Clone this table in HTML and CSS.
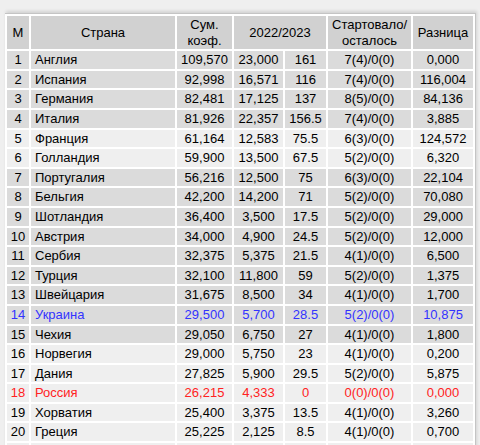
FILE: index.html
```html
<!DOCTYPE html>
<html lang="ru">
<head>
  <meta charset="UTF-8" />
  <meta name="viewport" content="width=device-width, initial-scale=1.0" />
  <title>Таблица коэффициентов УЕФА</title>
  <link rel="stylesheet" href="styles.css">
</head>
<body>
  <div class="frame">
    <table class="rating">
      <colgroup>
        <col class="c-pos">
        <col class="c-country">
        <col class="c-sum">
        <col class="c-season">
        <col class="c-points">
        <col class="c-teams">
        <col class="c-diff">
      </colgroup>
      <thead>
        <tr>
          <th>М</th>
          <th>Страна</th>
          <th>Сум.<br>коэф.</th>
          <th colspan="2">2022/2023</th>
          <th>Стартовало/<br>осталось</th>
          <th>Разница</th>
        </tr>
      </thead>
      <tbody>
        <tr class="dark"><td>1</td><td class="name">Англия</td><td>109,570</td><td>23,000</td><td>161</td><td>7(4)/0(0)</td><td>0,000</td></tr>
        <tr class="dark"><td>2</td><td class="name">Испания</td><td>92,998</td><td>16,571</td><td>116</td><td>7(4)/0(0)</td><td>116,004</td></tr>
        <tr class="dark"><td>3</td><td class="name">Германия</td><td>82,481</td><td>17,125</td><td>137</td><td>8(5)/0(0)</td><td>84,136</td></tr>
        <tr class="dark"><td>4</td><td class="name">Италия</td><td>81,926</td><td>22,357</td><td>156.5</td><td>7(4)/0(0)</td><td>3,885</td></tr>
        <tr class="light"><td>5</td><td class="name">Франция</td><td>61,164</td><td>12,583</td><td>75.5</td><td>6(3)/0(0)</td><td>124,572</td></tr>
        <tr class="light"><td>6</td><td class="name">Голландия</td><td>59,900</td><td>13,500</td><td>67.5</td><td>5(2)/0(0)</td><td>6,320</td></tr>
        <tr class="dark"><td>7</td><td class="name">Португалия</td><td>56,216</td><td>12,500</td><td>75</td><td>6(3)/0(0)</td><td>22,104</td></tr>
        <tr class="dark"><td>8</td><td class="name">Бельгия</td><td>42,200</td><td>14,200</td><td>71</td><td>5(2)/0(0)</td><td>70,080</td></tr>
        <tr class="dark"><td>9</td><td class="name">Шотландия</td><td>36,400</td><td>3,500</td><td>17.5</td><td>5(2)/0(0)</td><td>29,000</td></tr>
        <tr class="dark"><td>10</td><td class="name">Австрия</td><td>34,000</td><td>4,900</td><td>24.5</td><td>5(2)/0(0)</td><td>12,000</td></tr>
        <tr class="dark"><td>11</td><td class="name">Сербия</td><td>32,375</td><td>5,375</td><td>21.5</td><td>4(1)/0(0)</td><td>6,500</td></tr>
        <tr class="dark"><td>12</td><td class="name">Турция</td><td>32,100</td><td>11,800</td><td>59</td><td>5(2)/0(0)</td><td>1,375</td></tr>
        <tr class="dark"><td>13</td><td class="name">Швейцария</td><td>31,675</td><td>8,500</td><td>34</td><td>4(1)/0(0)</td><td>1,700</td></tr>
        <tr class="dark own"><td>14</td><td class="name">Украина</td><td>29,500</td><td>5,700</td><td>28.5</td><td>5(2)/0(0)</td><td>10,875</td></tr>
        <tr class="dark"><td>15</td><td class="name">Чехия</td><td>29,050</td><td>6,750</td><td>27</td><td>4(1)/0(0)</td><td>1,800</td></tr>
        <tr class="light"><td>16</td><td class="name">Норвегия</td><td>29,000</td><td>5,750</td><td>23</td><td>4(1)/0(0)</td><td>0,200</td></tr>
        <tr class="light"><td>17</td><td class="name">Дания</td><td>27,825</td><td>5,900</td><td>29.5</td><td>5(2)/0(0)</td><td>5,875</td></tr>
        <tr class="light out"><td>18</td><td class="name">Россия</td><td>26,215</td><td>4,333</td><td>0</td><td>0(0)/0(0)</td><td>0,000</td></tr>
        <tr class="light"><td>19</td><td class="name">Хорватия</td><td>25,400</td><td>3,375</td><td>13.5</td><td>4(1)/0(0)</td><td>3,260</td></tr>
        <tr class="light"><td>20</td><td class="name">Греция</td><td>25,225</td><td>2,125</td><td>8.5</td><td>4(1)/0(0)</td><td>0,700</td></tr>
        <!-- next row only peeks in at the bottom edge -->
        <tr class="light"><td></td><td class="name"></td><td></td><td></td><td></td><td></td><td></td></tr>
      </tbody>
    </table>
  </div>
</body>
</html>
```

FILE: styles.css
```css
body {
  margin: 0;
  background-color: #efefef;
  font-family: 'Liberation Sans', Arial, sans-serif;
  font-size: 13px;
  color: #000;
  overflow: hidden;
}

.frame {
  margin: 13px 0 0 5px;
  width: 470px;
  background-color: #fff;
  border-top: 1px solid #c4c4c4;
  border-right: 1px solid #c4c4c4;
  box-shadow: 1px -2px 3px rgba(0, 0, 0, 0.12);
}

.rating {
  table-layout: fixed;
  width: 470px;
  border-collapse: separate;
  border-spacing: 2px;
}

.c-pos { width: 22px; }
.c-country { width: 144px; }
.c-sum { width: 55px; }
.c-season { width: 49px; }
.c-points { width: 41px; }
.c-teams { width: 83px; }
.c-diff { width: 60px; }

.rating th {
  background-color: #d1d1d1;
  font-weight: normal;
  line-height: 15.6px;
  padding: 1px 0;
  text-align: center;
}

.rating td {
  height: 15.6px;
  line-height: 15.6px;
  padding: 1px 0;
  text-align: center;
  white-space: nowrap;
  overflow: hidden;
}

.rating td.name {
  text-align: left;
  padding-left: 4px;
}

.dark td {
  background-color: #dbdbdb;
}

.light td {
  background-color: #efefef;
}

.own td {
  color: #3333ff;
}

.out td {
  color: #ff2222;
}
```
